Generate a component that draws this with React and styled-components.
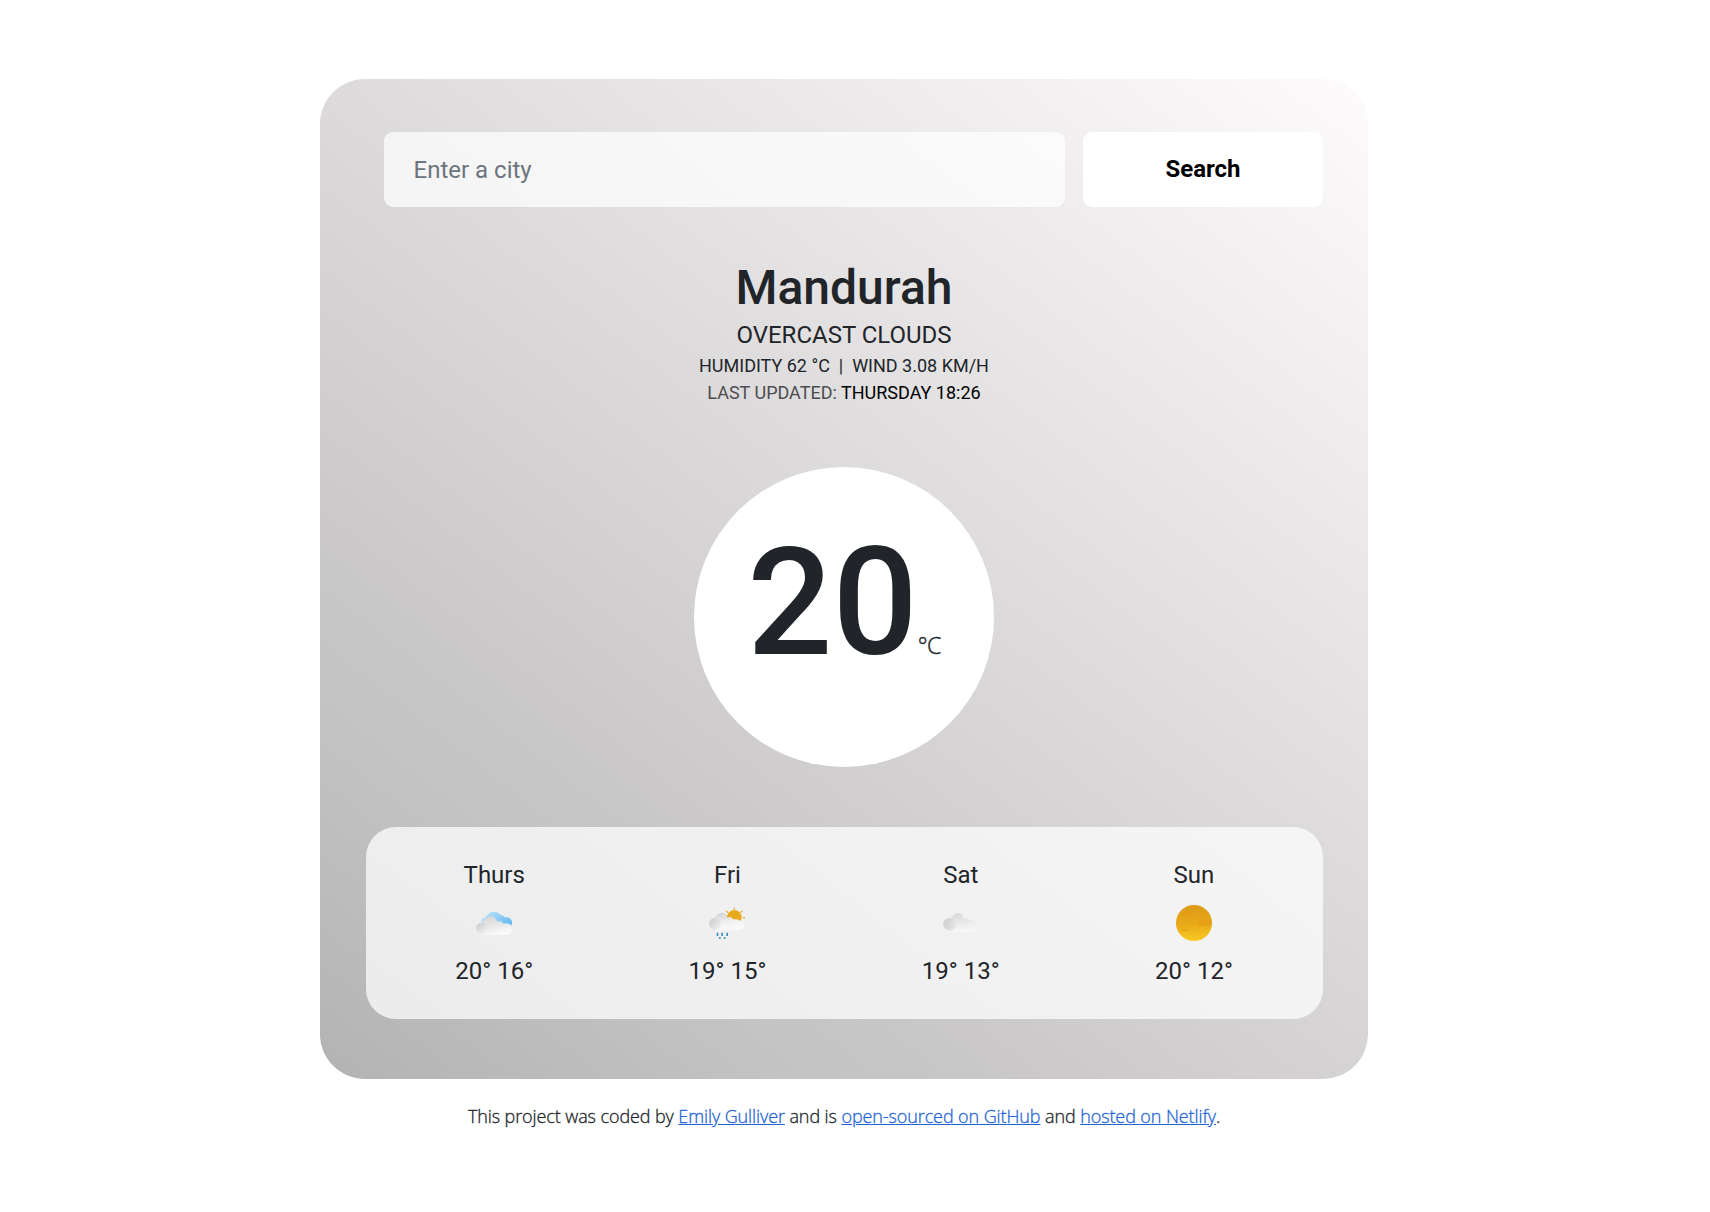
import React from "react";
import styled, { createGlobalStyle } from "styled-components";

const GlobalStyle = createGlobalStyle`
  *, *::before, *::after { box-sizing: border-box; }
  body {
    margin: 0;
    background: #fff;
    color: #212529;
    font-family: "Open Sans", "Noto Sans", sans-serif;
  }
`;

const Page = styled.div`
  display: flex;
  flex-direction: column;
  align-items: center;
  width: 1688px;
  padding-top: 79px;
`;

const Card = styled.main`
  display: flex;
  flex-direction: column;
  width: 1048px;
  height: 1000px;
  padding: 53px 45px 60px 46px;
  border-radius: 45px;
  background: linear-gradient(38deg, #b3b3b3 0%, #c2c3c2 20%, #cac8c9 30%, #fdfbfc 100%);
  font-family: Roboto, sans-serif;
`;

const SearchForm = styled.form`
  display: flex;
  gap: 18px;
  height: 75px;
  margin: 0 0 52px 18px;
`;

const CityInput = styled.input`
  flex: 1;
  min-width: 0;
  padding: 0 29.5px;
  border: 0;
  border-radius: 9px;
  outline: 0;
  background: rgba(255, 255, 255, 0.73);
  font: 400 24px Roboto, sans-serif;
  &::placeholder { color: #6c757d; opacity: 1; }
`;

const SearchButton = styled.button`
  width: 240px;
  padding: 0 0 2px;
  border: 0;
  border-radius: 9px;
  background: #fff;
  color: #000;
  font: 700 24px Roboto, sans-serif;
`;

const Overview = styled.section`
  display: flex;
  flex-direction: column;
  align-items: center;
  padding-right: 1px;
  text-transform: uppercase;
`;

const City = styled.h1`
  margin: 0;
  font-size: 48px;
  font-weight: 500;
  line-height: 57px;
  text-transform: none;
`;

const Condition = styled.div`
  padding-top: 2px;
  font-size: 24px;
  line-height: 34px;
`;

const Detail = styled.div`
  font-size: 18px;
  line-height: 27px;
  white-space: pre;
  color: ${(p) => (p.$muted ? "#4d4d4f" : "#212529")};
`;

const Time = styled.span`
  color: #000;
`;

const TemperatureDisc = styled.section`
  display: flex;
  justify-content: center;
  align-items: baseline;
  align-self: center;
  width: 300px;
  height: 300px;
  margin: 61px 1px 60px 0;
  padding-top: 46px;
  border-radius: 50%;
  background: #fff;
`;

const Degrees = styled.span`
  font-size: 150px;
  font-weight: 500;
  line-height: 180px;
`;

const Unit = styled.span`
  font-family: "Open Sans", "Noto Sans", sans-serif;
  font-size: 23px;
  font-weight: 300;
  letter-spacing: -0.5px;
  -webkit-text-stroke: 0.4px currentColor;
`;

const Forecast = styled.section`
  display: grid;
  grid-template-columns: repeat(4, 1fr);
  height: 192px;
  padding: 30px 12.4px 30px 11.6px;
  border-radius: 30px;
  background: rgba(255, 255, 255, 0.73);
`;

const Day = styled.div`
  display: flex;
  flex-direction: column;
  align-items: center;
  font-size: 24px;
  line-height: 36px;
`;

const Icon = styled.svg`
  display: block;
  width: 36px;
  height: 36px;
  margin: 12px 0;
`;

const Footer = styled.footer`
  margin-top: 24px;
  font-size: 18px;
  font-weight: 300;
  line-height: 27px;
  letter-spacing: -0.1px;
  -webkit-text-stroke: 0.3px currentColor;
`;

const Link = styled.a`
  color: #2465d6;
  text-decoration: underline;
`;

const BrokenClouds = () => (
  <Icon viewBox="0 0 108 108">
    <defs>
      <linearGradient id="bc-blue" x1="0" y1="0" x2="1" y2="0.5">
        <stop offset="0" stopColor="#c8e6fa" />
        <stop offset="1" stopColor="#6bbdf2" />
      </linearGradient>
      <linearGradient id="bc-white" x1="0.1" y1="0" x2="0.5" y2="1">
        <stop offset="0" stopColor="#d2d2d4" />
        <stop offset="1" stopColor="#fafafa" />
      </linearGradient>
      <linearGradient id="bc-puff" x1="0" y1="0" x2="0.7" y2="1">
        <stop offset="0" stopColor="#c8c8ca" />
        <stop offset="1" stopColor="#f2f2f2" />
      </linearGradient>
    </defs>
    <path d="M16 52 Q14 39 29 37 Q38 20 53 21 Q67 19 73 29 Q82 29 86 37 Q101 35 106 45 Q112 56 103 65 L60 66 Z" fill="url(#bc-blue)" />
    <path d="M18 90 Q0 88 0 70 Q1 54 18 52 Q24 40 34 40 Q44 29 55 38 Q62 42 65 50 Q75 46 82 56 Q94 52 104 60 Q112 74 104 84 Q100 90 91 90 Z" fill="url(#bc-white)" />
    <circle cx="18" cy="70" r="17" fill="url(#bc-puff)" />
  </Icon>
);

const SunShower = () => (
  <Icon viewBox="0 0 108 108">
    <defs>
      <linearGradient id="ss-cloud" x1="0.1" y1="0" x2="0.5" y2="1">
        <stop offset="0" stopColor="#cfcfd1" />
        <stop offset="0.65" stopColor="#f3f3f3" />
        <stop offset="1" stopColor="#f9f9f9" />
      </linearGradient>
      <linearGradient id="ss-puff" x1="0" y1="0" x2="1" y2="0.8">
        <stop offset="0" stopColor="#cacacc" />
        <stop offset="1" stopColor="#efeff0" />
      </linearGradient>
    </defs>
    <g stroke="#e9ae2e" strokeWidth="3.5" strokeLinecap="round">
      <path d="M76 8V13M52 18L56 22M99 18L95 22M103 38H108" />
    </g>
    <circle cx="76" cy="37" r="22" fill="#e9a91b" />
    <path d="M18 76 Q0 74 -1 57 Q1 40 18 38 Q24 24 39 23 Q53 24 56 39 Q65 32 73 43 Q88 41 95 47 Q106 49 105 63 Q103 75 92 76 Z" fill="url(#ss-cloud)" />
    <circle cx="18" cy="57" r="18" fill="url(#ss-puff)" />
    <g fill="#3c8fc4">
      <path d="M23 83h5v10h-5zM37 83h5v10h-5zM52 83h5v10h-5z" />
      <circle cx="32.500" cy="99" r="3" />
      <circle cx="47" cy="99" r="3" />
    </g>
  </Icon>
);

const Cloud = () => (
  <Icon viewBox="0 0 108 108">
    <defs>
      <linearGradient id="cl-body" x1="0.2" y1="0" x2="0.4" y2="1">
        <stop offset="0" stopColor="#d9d9da" />
        <stop offset="1" stopColor="#f7f7f7" />
      </linearGradient>
      <linearGradient id="cl-puff" x1="0" y1="0.2" x2="1" y2="0.8">
        <stop offset="0" stopColor="#cdcdce" />
        <stop offset="1" stopColor="#e7e7e7" />
      </linearGradient>
    </defs>
    <path d="M20 81 Q1 79 0 61 Q2 42 24 40 Q32 24 46 24 Q60 26 63 41 Q71 36 79 45 Q90 43 98 51 Q108 56 107 68 Q104 80 93 81 Z" fill="url(#cl-body)" />
    <circle cx="20" cy="58" r="19" fill="url(#cl-puff)" />
  </Icon>
);

const Sun = () => (
  <Icon viewBox="0 0 108 108">
    <defs>
      <linearGradient id="sun-fill" x1="0" y1="0" x2="0" y2="1">
        <stop offset="0" stopColor="#dc9a18" />
        <stop offset="0.55" stopColor="#e8aa18" />
        <stop offset="1" stopColor="#f9ca24" />
      </linearGradient>
    </defs>
    <circle cx="54" cy="54" r="54" fill="url(#sun-fill)" />
    <g fill="#e89a14" opacity="0.6">
      <rect x="21" y="18" width="27" height="14" rx="7" />
      <path d="M107 44H78Q68 44 68 53Q68 62 78 62H107Z" />
      <rect x="17" y="72" width="20" height="7" rx="3.500" />
    </g>
  </Icon>
);

const days = [
  { name: "Thurs", Glyph: BrokenClouds, temps: "20° 16°" },
  { name: "Fri", Glyph: SunShower, temps: "19° 15°" },
  { name: "Sat", Glyph: Cloud, temps: "19° 13°" },
  { name: "Sun", Glyph: Sun, temps: "20° 12°" },
];

export default function App() {
  return (
    <>
      <GlobalStyle />
      <Page>
        <Card>
          <SearchForm onSubmit={(e) => e.preventDefault()}>
            <CityInput placeholder="Enter a city" />
            <SearchButton type="submit">Search</SearchButton>
          </SearchForm>
          <Overview>
            <City>Mandurah</City>
            <Condition>overcast clouds</Condition>
            <Detail>{"Humidity 62 °C \u00a0|\u00a0 Wind 3.08 km/h"}</Detail>
            <Detail $muted>
              Last updated: <Time>Thursday 18:26</Time>
            </Detail>
          </Overview>
          <TemperatureDisc>
            <Degrees>20</Degrees>
            <Unit>°C</Unit>
          </TemperatureDisc>
          <Forecast>
            {days.map(({ name, Glyph, temps }) => (
              <Day key={name}>
                <span>{name}</span>
                <Glyph />
                <span>{temps}</span>
              </Day>
            ))}
          </Forecast>
        </Card>
        <Footer>
          This project was coded by <Link href="#">Emily Gulliver</Link> and is{" "}
          <Link href="#">open-sourced on GitHub</Link> and{" "}
          <Link href="#">hosted on Netlify</Link>.
        </Footer>
      </Page>
    </>
  );
}
